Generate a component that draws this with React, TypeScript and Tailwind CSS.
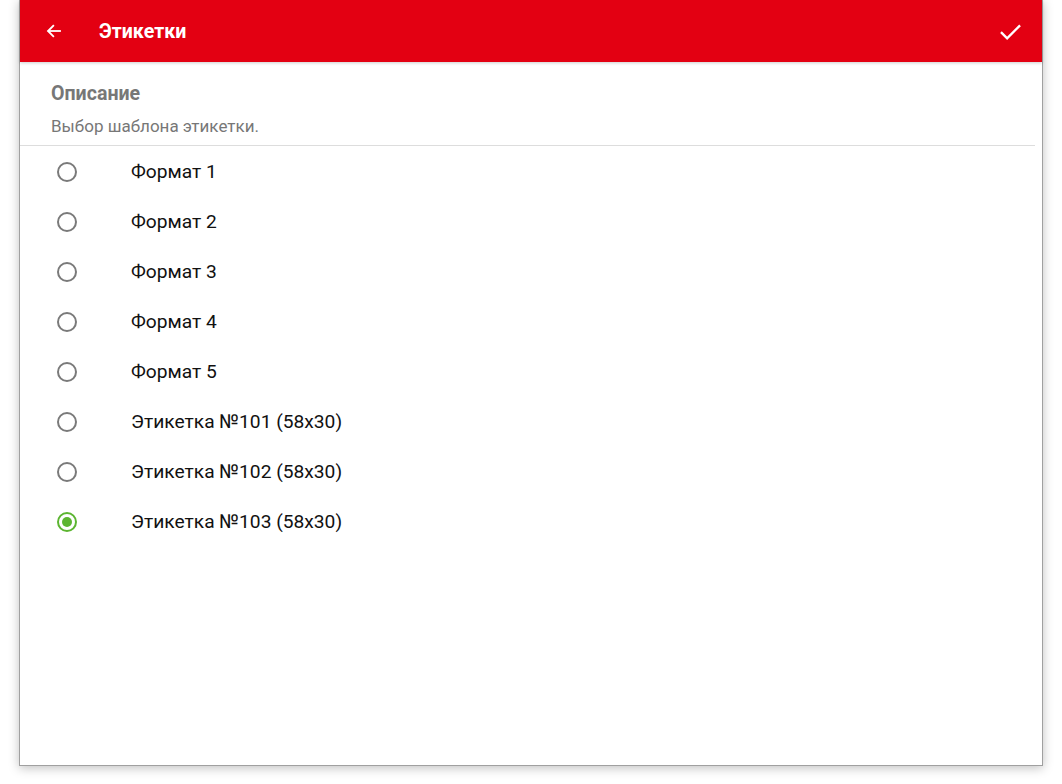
import React from "react";

const items = [
  "Формат 1",
  "Формат 2",
  "Формат 3",
  "Формат 4",
  "Формат 5",
  "Этикетка №101 (58x30)",
  "Этикетка №102 (58x30)",
  "Этикетка №103 (58x30)",
];

function Radio({ checked }: { checked: boolean }) {
  return (
    <svg width="22" height="22" viewBox="0 0 22 22">
      <circle
        cx="11"
        cy="11"
        r="9"
        fill="none"
        stroke={checked ? "#5cb531" : "#7a7a7a"}
        strokeWidth="2"
      />
      {checked && <circle cx="11" cy="11" r="5" fill="#5cb531" />}
    </svg>
  );
}

export default function App() {
  return (
    <div className="w-[1062px] h-[784px] bg-white relative overflow-hidden" style={{ fontFamily: "Roboto, 'Noto Sans', sans-serif" }}>
      <div className="ml-[19px] w-[1024px] h-[766px] bg-white border-x border-b border-[#a0a0a0] shadow-[0_2px_10px_rgba(0,0,0,0.25)] flex flex-col">
        <div className="h-[62px] bg-[#e30012] flex items-center shadow-[0_1px_3px_rgba(0,0,0,0.2)] relative z-10">
          <div className="w-[79px] pl-[25px] flex items-center">
            <svg width="18" height="18" viewBox="0 0 24 24" fill="none" stroke="white" strokeWidth="2.4" strokeLinecap="square">
              <path d="M20 12H5" />
              <path d="M11 5l-7 7 7 7" />
            </svg>
          </div>
          <div className="text-white text-[19.6px] font-bold pt-[2px]">Этикетки</div>
          <div className="flex-1" />
          <div className="pr-[18px] flex items-center">
            <svg width="27" height="27" viewBox="0 0 24 24" fill="none" stroke="white" strokeWidth="2.1">
              <path d="M3.5 12.5l5.5 5.5L20.5 6.5" />
            </svg>
          </div>
        </div>
        <div className="pl-[31px] pt-[21px]">
          <div className="text-[19.6px] font-bold text-[#777777] leading-[22px]">Описание</div>
          <div className="text-[17px] text-[#777777] leading-[20px] mt-[11px]">Выбор шаблона этикетки.</div>
        </div>
        <div className="mt-[9px] w-[1015px] h-px bg-[#dddddd]" />
        <div className="flex flex-col pt-[1px]">
          {items.map((t, i) => (
            <div key={t} className="h-[50px] flex items-center">
              <div className="w-[111px] pl-[36px] flex items-center">
                <Radio checked={i === items.length - 1} />
              </div>
              <div className="text-[19.2px] text-[#111111]">{t}</div>
            </div>
          ))}
        </div>
      </div>
      <div className="absolute top-0 left-[382px] w-[298px] h-px bg-[#555555]" />
    </div>
  );
}
